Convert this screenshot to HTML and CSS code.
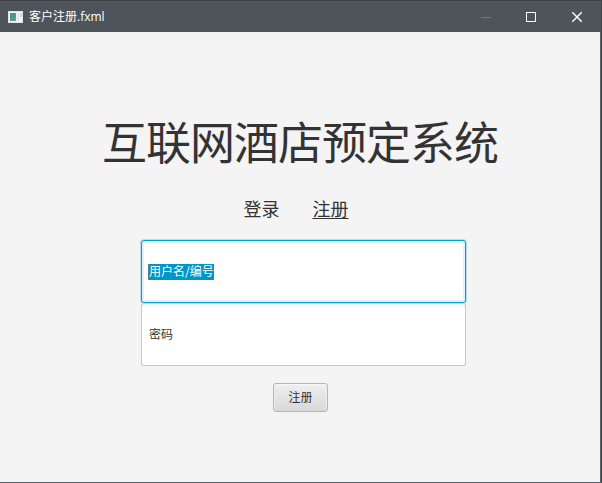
FILE: index.html
```html
<!DOCTYPE html>
<html lang="zh-CN">
<head>
<meta charset="utf-8">
<title>客户注册.fxml</title>
<link rel="stylesheet" href="styles.css">
</head>
<body>
<div class="window">
  <header class="titlebar">
    <svg class="app-icon" width="15" height="12" viewBox="0 0 15 12">
      <defs><linearGradient id="g" x1="0" y1="0" x2="1" y2="1"><stop offset="0" stop-color="#4a83a0"/><stop offset="1" stop-color="#5dab72"/></linearGradient></defs>
      <rect width="15" height="12" fill="#dfe3e5"/>
      <rect x="1" y="1" width="13" height="10" fill="#f2f3f4"/>
      <rect x="2" y="2" width="6" height="8" fill="url(#g)"/>
      <rect x="9" y="2" width="2" height="8" fill="#e4e6e7"/>
      <rect x="12" y="2" width="2" height="4" fill="#d0d4d6"/>
    </svg>
    <span class="caption">客户注册.fxml</span>
    <svg class="controls" width="101" height="12" viewBox="0 0 101 12">
      <path d="M0 6.5h10" stroke="#72787b"/>
      <rect x="45.5" y="1.5" width="9" height="9" fill="none" stroke="#fff"/>
      <path d="M91.3 1.3l9.4 9.4M100.7 1.3l-9.4 9.4" stroke="#fff" stroke-width="1.4"/>
    </svg>
  </header>
  <main class="content">
    <h1 class="heading">互联网酒店预定系统</h1>
    <nav class="tabs">
      <a class="tab">登录</a>
      <a class="tab active">注册</a>
    </nav>
    <form class="form">
      <div class="field focused"><span class="selected">用户名/编号</span></div>
      <div class="field"><span class="text">密码</span></div>
      <button class="submit" type="button">注册</button>
    </form>
  </main>
</div>
</body>
</html>
```
FILE: styles.css
```css
* { box-sizing: border-box; }
body {
  margin: 0;
  font-family: "Noto Sans CJK SC", sans-serif;
  font-size: 12px;
  color: #333;
  overflow: hidden;
}
.window {
  width: 602px;
  height: 483px;
  display: flex;
  flex-direction: column;
  background: #f4f4f4;
  border-top: 1px solid #3c3e3f;
  border-right: 1px solid #3a4245;
  border-bottom: 1px solid #596466;
}
.titlebar {
  height: 31px;
  display: flex;
  align-items: center;
  padding: 0 19px 0 8px;
  background: #4d555a;
  border-top: 1px solid #555d61;
  color: #fff;
}
.app-icon { margin-bottom: 1px; }
.controls { margin: 0 0 1px auto; }
.caption {
  margin-left: 6px;
  font-family: "Open Sans", "Noto Sans CJK SC", sans-serif;
  line-height: 16px;
}
.content {
  flex: 1;
  display: flex;
  flex-direction: column;
  align-items: center;
  border-right: 1px solid #596469;
}
.heading {
  margin: 78px 0 0;
  font-size: 45px;
  letter-spacing: -1px;
  font-weight: 400;
  line-height: 62px;
  height: 62px;
  white-space: nowrap;
}
.tabs {
  display: flex;
  gap: 33px;
  margin: 23px 0 0 -8px;
  font-size: 18px;
  line-height: 26px;
}
.tab { height: 26px; }
.active {
  text-decoration: underline;
  text-decoration-thickness: 1px;
  text-underline-offset: 2px;
}
.form {
  width: 325px;
  display: flex;
  flex-direction: column;
  align-items: center;
  margin: 19px 0 0 7px;
}
.field {
  width: 325px;
  height: 63px;
  display: flex;
  align-items: center;
  padding: 0 7px;
  border: 1px solid #c8c8c8;
  border-top-color: #bbb;
  border-radius: 3px;
  background: linear-gradient(#f3f3f3, #fff 5px);
}
.focused {
  border-color: #039ed3;
  background: #fff;
  box-shadow: 0 0 0 1px #b5deec, inset 0 0 0 2px #e1f2f8;
  z-index: 1;
}
.text { margin-bottom: 2px; }
.selected {
  height: 16px;
  line-height: 14px;
  color: #fff;
  background: #0096c9;
  box-shadow: -1px 0 #5d7d88;
}
.submit {
  width: 55px;
  height: 29px;
  margin: 17px 0 0 -6px;
  padding: 0 0 2px;
  border: 1px solid #b5b5b5;
  border-radius: 3px;
  background: linear-gradient(#efefef, #d9d9d9);
  box-shadow: inset 0 1px #f7f7f7, inset 1px 0 #ededed, inset -1px 0 #ededed;
  font: inherit;
  color: #333;
}
```
